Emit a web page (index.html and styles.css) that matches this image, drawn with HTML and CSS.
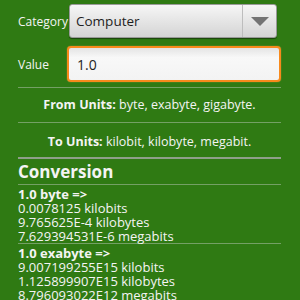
FILE: index.html
```html
<html>
<head>
<link rel="stylesheet" href="styles.css">
</head>
<body>
<div class="screen">

  <div class="row row-category">
    <span class="label">Category</span>
    <div class="spinner">
      <span class="spinner-text">Computer</span>
      <span class="spinner-arrow">
        <svg width="20" height="10" viewBox="0 0 20 10"><polygon points="1,1 19,1 10,10" fill="#737373"/></svg>
      </span>
    </div>
  </div>

  <div class="row row-value">
    <span class="label">Value</span>
    <div class="edit">1.0</div>
  </div>

  <div class="divider"></div>
  <div class="units"><b>From Units:</b> byte, exabyte, gigabyte.</div>
  <div class="divider"></div>
  <div class="units units-to"><b>To Units:</b> kilobit, kilobyte, megabit.</div>
  <div class="divider thick"></div>

  <div class="heading">Conversion</div>
  <div class="divider"></div>

  <div class="result">
    <div class="from">1.0 byte =&gt;</div>
    <div>0.0078125 kilobits</div>
    <div>9.765625E-4 kilobytes</div>
    <div>7.629394531E-6 megabits</div>
  </div>
  <div class="divider"></div>
  <div class="result">
    <div class="from">1.0 exabyte =&gt;</div>
    <div>9.007199255E15 kilobits</div>
    <div>1.125899907E15 kilobytes</div>
    <div>8.796093022E12 megabits</div>
  </div>

</div>
</body>
</html>
```

FILE: styles.css
```css
body {
  margin: 0;
  background: #2f7a13;
  font-family: "Open Sans", "DejaVu Sans", sans-serif;
  color: #f4f4f4;
}

.screen {
  width: 300px;
  height: 300px;
  overflow: hidden;
  padding: 0 19px 0 18px;
  box-sizing: border-box;
}

.row {
  display: flex;
  align-items: center;
}

.row-category {
  margin-top: 4px;
  height: 34px;
}

.row-value {
  margin-top: 8px;
  height: 36px;
}

.label {
  font-size: 12px;
  width: 49px;
  flex: none;
}

.spinner {
  flex: 1;
  height: 34px;
  margin: 0 4px 0 2px;
  box-sizing: border-box;
  display: flex;
  align-items: center;
  border: 1px solid #9a9a9a;
  border-radius: 3px;
  background: linear-gradient(#f6f6f6, #d4d4d4);
  box-shadow: 0 1px 1px rgba(0, 0, 0, 0.45);
}

.spinner-text {
  flex: 1;
  padding-left: 6px;
  font-size: 13.5px;
  color: #1e1e1e;
}

.spinner-arrow {
  width: 33px;
  height: 100%;
  display: flex;
  align-items: center;
  justify-content: center;
  border-left: 1px solid #bdbdbd;
}

.edit {
  flex: 1;
  height: 36px;
  box-sizing: border-box;
  padding-left: 8px;
  display: flex;
  align-items: center;
  font-size: 14px;
  color: #1e1e1e;
  border: 2px solid #f88a1c;
  border-radius: 4px;
  background: linear-gradient(#e4e4e4, #f8f8f8 30%, #f3f3f3);
  box-shadow: 0 0 1px #ffb15c;
}

.divider {
  height: 1px;
  background: #74a065;
}

.row-value + .divider {
  margin-top: 5px;
}

.divider.thick {
  height: 2px;
  background: #8f9f8a;
}

.units {
  height: 34px;
  line-height: 34px;
  text-align: center;
  font-size: 12.5px;
}

.units-to {
  height: 34px;
  line-height: 38px;
}

.heading {
  height: 25px;
  line-height: 26px;
  font-size: 17px;
  font-weight: bold;
}

.result {
  padding-top: 2px;
  font-size: 13px;
  line-height: 14px;
}

.from {
  font-weight: bold;
}
```
